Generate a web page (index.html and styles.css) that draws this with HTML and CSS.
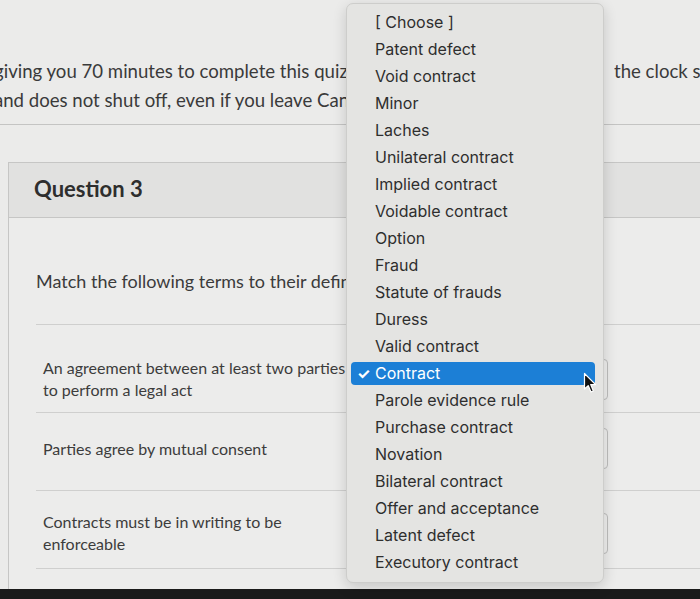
FILE: index.html
```html
<!DOCTYPE html>
<html>
<head>
<meta charset="utf-8">
<title>Quiz - Question 3</title>
<link rel="stylesheet" href="styles.css">
</head>
<body>
<div class="page">
  <div class="intro">
    <div class="intro-line">
      <span class="intro-left">giving you 70 minutes to complete this quiz. Canvas keeps the time and</span>
      <span class="intro-right">the clock starts</span>
    </div>
    <div class="intro-line">
      <span class="intro-left">and does not shut off, even if you leave Canvas</span>
    </div>
  </div>

  <div class="question">
    <div class="question-header">Question 3</div>
    <div class="question-body">
      <p class="question-text">Match the following terms to their definitions.</p>
      <div class="answers">
        <div class="answer first">
          <div class="answer-text">An agreement between at least two parties<br>to perform a legal act</div>
          <div class="select"><span class="chev"></span></div>
        </div>
        <div class="answer">
          <div class="answer-text">Parties agree by mutual consent</div>
          <div class="select"><span class="chev"></span></div>
        </div>
        <div class="answer last">
          <div class="answer-text">Contracts must be in writing to be<br>enforceable</div>
          <div class="select"><span class="chev"></span></div>
        </div>
      </div>
    </div>
  </div>
  <div class="bezel"></div>

  <ul class="menu">
    <li class="item">[ Choose ]</li>
    <li class="item">Patent defect</li>
    <li class="item">Void contract</li>
    <li class="item">Minor</li>
    <li class="item">Laches</li>
    <li class="item">Unilateral contract</li>
    <li class="item">Implied contract</li>
    <li class="item">Voidable contract</li>
    <li class="item">Option</li>
    <li class="item">Fraud</li>
    <li class="item">Statute of frauds</li>
    <li class="item">Duress</li>
    <li class="item">Valid contract</li>
    <li class="item selected"><span class="check">&#10003;</span>Contract</li>
    <li class="item">Parole evidence rule</li>
    <li class="item">Purchase contract</li>
    <li class="item">Novation</li>
    <li class="item">Bilateral contract</li>
    <li class="item">Offer and acceptance</li>
    <li class="item">Latent defect</li>
    <li class="item">Executory contract</li>
  </ul>

  <svg class="cursor" width="14" height="22" viewBox="0 0 14 22">
    <path d="M1.5 1.5 L1.5 17 L5.2 13.6 L8 20 L10.4 19 L7.7 12.6 L12.6 12.6 Z" fill="#111" stroke="#fff" stroke-width="1.2" stroke-linejoin="round"/>
  </svg>
</div>
</body>
</html>
```

FILE: styles.css
```css
body {
  margin: 0px;
  padding: 0px;
  background-color: #ebebea;
  overflow: hidden;
}

.page {
  position: relative;
  width: 700px;
  height: 599px;
  overflow: hidden;
  font-family: Lato, "Open Sans", sans-serif;
  color: #3a3a3a;
}

/* intro text above the question */
.intro {
  padding-top: 57px;
  padding-bottom: 9px;
  border-bottom: 1px solid #c4c4c3;
}

.intro-line {
  display: grid;
  grid-template-columns: 620px 200px;
  margin-left: -6px;
  font-size: 18.6px;
  line-height: 29px;
  white-space: nowrap;
}

.intro-left { overflow: hidden; }
.intro-right { overflow: hidden; }

/* question box */
.question {
  margin-top: 37px;
  margin-left: 8px;
  width: 720px;
  height: 426px;
  border: 1px solid #c6c6c5;
  border-bottom: none;
  background-color: #ececeb;
}

.question-header {
  height: 54px;
  line-height: 52px;
  padding-left: 25px;
  background-color: #e1e1e0;
  border-bottom: 1px solid #c6c6c5;
  font-size: 22px;
  font-weight: 700;
  color: #2e2e2e;
}

.question-body {
  padding-left: 27px;
}

.question-text {
  margin: 0px;
  padding-top: 51px;
  height: 55px;
  font-size: 18px;
  line-height: 24px;
  color: #3b3b3b;
  white-space: nowrap;
}

.answers {
  border-top: 1px solid #cfcfce;
}

.answer {
  display: grid;
  grid-template-columns: 310px 1fr;
  align-items: center;
  padding: 15px 0px 21px 0px;
  border-bottom: 1px solid #cfcfce;
}

.answer.first {
  padding: 32px 0px 11px 0px;
}

.answer.last {
  padding: 20px 0px 13px 0px;
}

.answer-text {
  padding-left: 7px;
  font-size: 16px;
  line-height: 22px;
  color: #3c3c3c;
  white-space: nowrap;
}

.select {
  position: relative;
  margin-left: 44px;
  width: 216px;
  height: 39px;
  border: 1px solid #bdbdbc;
  border-radius: 4px;
  background-color: #efefee;
}

.chev {
  position: absolute;
  right: 4px;
  top: 17px;
  width: 3px;
  height: 3px;
  border-right: 1px solid #555;
  border-bottom: 1px solid #555;
  transform: rotate(45deg);
}

.bezel {
  height: 12px;
  background-color: #1a1a1a;
}

/* open select menu */
.menu {
  position: absolute;
  left: 346px;
  top: 3px;
  width: 256px;
  margin: 0px;
  padding: 5px 0px 6px 0px;
  list-style: none;
  background-color: #e4e4e2;
  border: 1px solid #cdcdcb;
  border-radius: 7px;
  box-shadow: 0px 4px 14px rgba(0,0,0,0.16);
  font-family: Inter, "Open Sans", sans-serif;
  font-size: 16px;
  color: #2e2e2e;
}

.item {
  height: 27px;
  line-height: 27px;
  padding-left: 28px;
  white-space: nowrap;
}

.selected {
  position: relative;
  margin: 2px 8px 2px 4px;
  height: 23px;
  line-height: 23px;
  padding-left: 24px;
  background-color: #1c7fd6;
  border-radius: 4px;
  color: #ffffff;
}

.check {
  position: absolute;
  left: 6px;
  font-size: 15px;
  font-weight: 700;
}

.cursor {
  position: absolute;
  left: 583px;
  top: 372px;
}
```
